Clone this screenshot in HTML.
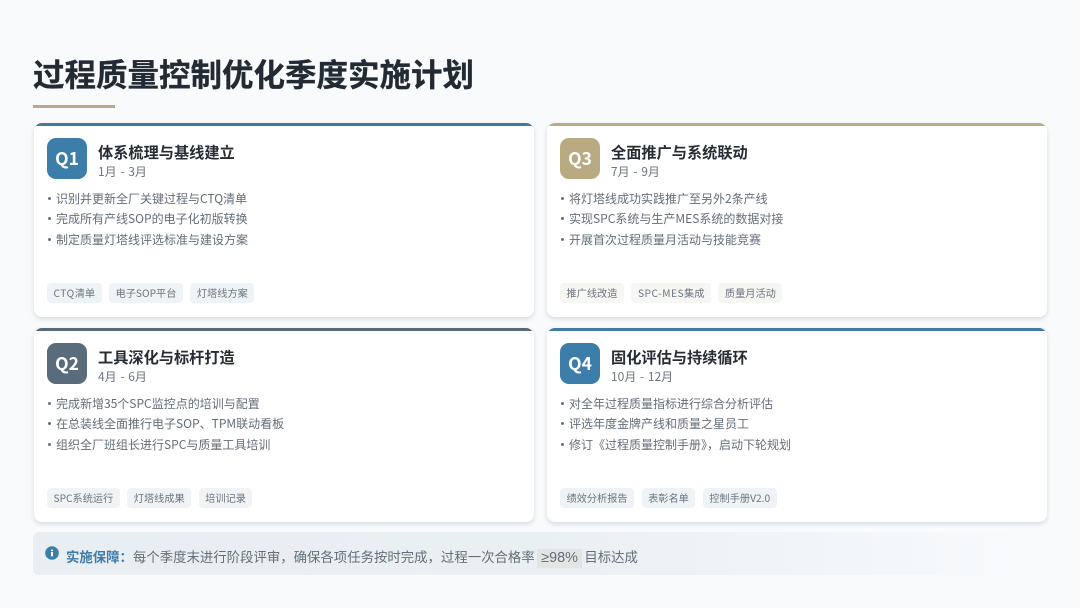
<!DOCTYPE html>
<html lang="zh"><head><meta charset="utf-8">
<style>
html,body{margin:0;padding:0;width:1080px;height:608px;overflow:hidden;background:#f8fafc;font-family:"Noto Sans CJK SC","Liberation Sans",sans-serif}
#w{position:relative;width:1080px;height:608px;filter:blur(.35px)}
h1{position:absolute;left:33px;top:51px;margin:0;font-size:31.5px;line-height:44px;font-weight:700;color:#222a33;white-space:nowrap;-webkit-text-stroke:.25px #222a33}
.rule{position:absolute;left:33px;top:105px;width:82px;height:3px;background:#b8a98a}
.card{position:absolute;width:500px;height:194px;background:#fff;border-radius:8px;box-shadow:0 2px 5px rgba(40,60,80,.16);overflow:hidden}
.bar{position:absolute;left:0;top:0;width:100%;height:3px}
.q{position:absolute;left:13.5px;top:15px;width:40px;height:41px;border-radius:9px;color:#fff;font-weight:700;font-size:17.5px;line-height:42px;text-align:center}
.t{position:absolute;left:64.5px;top:18px;font-size:15.2px;line-height:22px;font-weight:700;color:#262c33;white-space:nowrap}
.d{position:absolute;left:64.5px;top:40px;font-size:12px;line-height:18px;color:#6b7580;white-space:nowrap;word-spacing:1px}
.l{position:absolute;left:13.5px;font-size:12px;line-height:20px;color:#636e79;white-space:nowrap}
.l i{display:inline-block;width:3.4px;height:3.4px;border-radius:50%;background:#66717c;margin:0 4.6px 2px 1px;vertical-align:middle}
.tags{position:absolute;left:13.5px;top:160px;display:flex;gap:7.5px}
.tags span{height:20px;line-height:20px;padding:0 6.5px;border-radius:4px;font-size:10.2px;color:#6b7580;background:#eef3f6;white-space:nowrap}
.tags u{text-decoration:none;letter-spacing:.5px}
.g span{background:#f6f6f3}
.s span{background:#f1f3f5}
.note{position:absolute;left:33px;top:532px;width:1000px;height:43px;border-radius:6px;background:linear-gradient(90deg,#e9eef2 0%,#eaeff2 50%,#f8fafc 100%)}
.ic{position:absolute;left:12px;top:14px;width:14px;height:14px}
.nt{position:absolute;left:33px;top:12.5px;font-size:13.4px;line-height:23px;color:#636e79;white-space:nowrap}
.nt b{color:#3e7ba8;font-weight:700}
.nt em{font-style:normal;font-family:"Liberation Sans",sans-serif;font-size:14.4px;display:inline-block;height:19px;line-height:19px;vertical-align:0;background:#e3e5e3;padding:0 4.5px;margin:0 2px 0 2px}
</style></head><body><div id="w">
<h1>过程质量控制优化季度实施计划</h1>
<div class="rule"></div>

<div class="card" style="left:33.5px;top:123px">
<div class="bar" style="background:#437a9f"></div>
<div class="q" style="background:#3d7daa">Q1</div>
<div class="t">体系梳理与基线建立</div><div class="d">1月 - 3月</div>
<div class="l" style="top:65.5px"><i></i>识别并更新全厂关键过程与CTQ清单</div>
<div class="l" style="top:86px"><i></i>完成所有产线SOP的电子化初版转换</div>
<div class="l" style="top:106.5px"><i></i>制定质量灯塔线评选标准与建设方案</div>
<div class="tags"><span><u>CTQ</u>清单</span><span>电子SOP平台</span><span>灯塔线方案</span></div>
</div>

<div class="card" style="left:546.5px;top:123px">
<div class="bar" style="background:#b8ab87"></div>
<div class="q" style="background:#b9aa82">Q3</div>
<div class="t">全面推广与系统联动</div><div class="d">7月 - 9月</div>
<div class="l" style="top:65.5px"><i></i>将灯塔线成功实践推广至另外2条产线</div>
<div class="l" style="top:86px"><i></i>实现SPC系统与生产MES系统的数据对接</div>
<div class="l" style="top:106.5px"><i></i>开展首次过程质量月活动与技能竞赛</div>
<div class="tags g"><span>推广线改造</span><span><u>SPC-MES</u>集成</span><span>质量月活动</span></div>
</div>

<div class="card" style="left:33.5px;top:328px">
<div class="bar" style="background:#5a6a78"></div>
<div class="q" style="background:#5a6b7c">Q2</div>
<div class="t">工具深化与标杆打造</div><div class="d">4月 - 6月</div>
<div class="l" style="top:65.5px"><i></i>完成新增35个SPC监控点的培训与配置</div>
<div class="l" style="top:86px"><i></i>在总装线全面推行电子SOP、TPM联动看板</div>
<div class="l" style="top:106.5px"><i></i>组织全厂班组长进行SPC与质量工具培训</div>
<div class="tags s"><span>SPC系统运行</span><span>灯塔线成果</span><span>培训记录</span></div>
</div>

<div class="card" style="left:546.5px;top:328px">
<div class="bar" style="background:#437a9f"></div>
<div class="q" style="background:#3d7daa">Q4</div>
<div class="t">固化评估与持续循环</div><div class="d">10月 - 12月</div>
<div class="l" style="top:65.5px"><i></i>对全年过程质量指标进行综合分析评估</div>
<div class="l" style="top:86px"><i></i>评选年度金牌产线和质量之星员工</div>
<div class="l" style="top:106.5px"><i></i>修订《过程质量控制手册》，启动下轮规划</div>
<div class="tags"><span>绩效分析报告</span><span>表彰名单</span><span>控制手册V2.0</span></div>
</div>

<div class="note">
<svg class="ic" viewBox="0 0 14 14"><circle cx="7" cy="7" r="6.8" fill="#3d7daa"/><rect x="6" y="6" width="2" height="4.4" fill="#fff"/><rect x="6" y="3.6" width="2" height="1.6" fill="#fff"/></svg>
<div class="nt"><b>实施保障：</b>每个季度末进行阶段评审，确保各项任务按时完成，过程一次合格率<em>≥98%</em>目标达成</div>
</div>
</div></body></html>
